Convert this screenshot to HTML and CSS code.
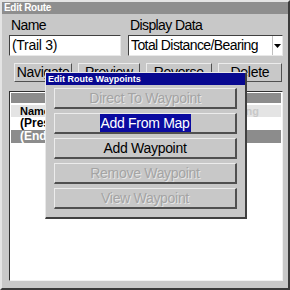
FILE: index.html
```html
<!DOCTYPE html>
<html lang="en">
<head>
    <meta charset="UTF-8">
    <title>Edit Route</title>
    <link rel="stylesheet" href="styles.css">
</head>
<body>
    <div class="window">
        <div class="titlebar">Edit Route</div>

        <div class="fields">
            <div class="field name-field">
                <label>Name</label>
                <div class="input">(Trail 3)</div>
            </div>
            <div class="field data-field">
                <label>Display Data</label>
                <div class="input select">
                    <span class="value">Total Distance/Bearing</span>
                    <span class="arrow">
                        <svg width="7" height="4" viewBox="0 0 7 4"><path d="M0 0h7L3.5 4z" fill="#000"/></svg>
                    </span>
                </div>
            </div>
        </div>

        <div class="actions">
            <button class="btn btn-nav">Navigate</button>
            <button class="btn btn-prev">Preview</button>
            <button class="btn btn-rev">Reverse</button>
            <button class="btn btn-del">Delete</button>
        </div>

        <div class="list">
            <div class="list-bar"></div>
            <div class="list-head">
                <span class="col-name">Name</span>
                <span class="col-dist">Distance</span>
                <span class="col-bear">Bearing</span>
            </div>
            <div class="row">(Press ENT to add waypoint)</div>
            <div class="row selected">(End of route)</div>
        </div>

        <div class="dialog">
            <div class="dialog-title">Edit Route Waypoints</div>
            <div class="dialog-body">
                <button class="btn dbtn disabled">Direct To Waypoint</button>
                <button class="btn dbtn"><span class="focus">Add From Map</span></button>
                <button class="btn dbtn">Add Waypoint</button>
                <button class="btn dbtn disabled">Remove Waypoint</button>
                <button class="btn dbtn disabled">View Waypoint</button>
            </div>
        </div>
    </div>
</body>
</html>
```

FILE: styles.css
```css
body {
    margin: 0;
    padding: 0;
    font-family: "Liberation Sans", Arial, sans-serif;
    background: #c8c8c8;
}
.window {
    position: relative;
    width: 290px;
    height: 290px;
    box-sizing: border-box;
    background: #c8c8c8;
    border-top: 2px solid #e4e4e4;
    border-left: 2px solid #e4e4e4;
    border-right: 2px solid #3a3a3a;
    border-bottom: 2px solid #3a3a3a;
    overflow: hidden;
}
.titlebar {
    height: 12px;
    background: #8e8e8e;
    color: #fff;
    font-size: 10px;
    font-weight: bold;
    line-height: 12px;
    padding-left: 2px;
    letter-spacing: -0.3px;
}
.fields {
    display: flex;
    gap: 7px;
    padding: 3px 5px 0 7px;
}
.field label {
    display: block;
    font-size: 14px;
    line-height: 17px;
    letter-spacing: -0.6px;
    color: #000;
    padding-left: 2px;
    margin-bottom: 1px;
}
.name-field {
    flex: none;
    width: 112px;
}
.data-field {
    flex: 1;
    min-width: 0;
}
.input {
    height: 21px;
    box-sizing: border-box;
    background: #fff;
    border-top: 1px solid #404040;
    border-left: 1px solid #404040;
    border-right: 1px solid #e8e8e8;
    border-bottom: 1px solid #e8e8e8;
    font-size: 14px;
    line-height: 19px;
    letter-spacing: -0.3px;
    padding-left: 2px;
    white-space: nowrap;
    overflow: hidden;
}
.select {
    display: flex;
    justify-content: space-between;
}
.value {
    letter-spacing: -0.6px;
    overflow: hidden;
}
.arrow {
    flex: none;
    width: 9px;
    display: flex;
    align-items: center;
    justify-content: center;
    background: #fff;
    border-left: 1px solid #c0c0c0;
}
.actions {
    display: flex;
    gap: 6px;
    padding: 7px 6px 0 12px;
}
.btn {
    font-family: "Liberation Sans", Arial, sans-serif;
    background: #c8c8c8;
    color: #000;
    font-size: 14px;
    letter-spacing: -0.3px;
    height: 19px;
    line-height: 17px;
    padding: 0;
    border-top: 1px solid #ececec;
    border-left: 1px solid #ececec;
    border-right: 1px solid #505050;
    border-bottom: 1px solid #505050;
    box-sizing: border-box;
    white-space: nowrap;
}
.btn-nav { width: 59px; }
.btn-prev { width: 62px; }
.btn-rev { width: 67px; }
.btn-del { width: 65px; }
.list {
    margin: 9px 5px 0 7px;
    height: 186px;
    background: #fff;
    border-top: 1px solid #303030;
    border-left: 1px solid #303030;
    border-right: 1px solid #f0f0f0;
    border-bottom: 1px solid #f0f0f0;
    padding: 1px 1px;
}
.list-bar {
    height: 10px;
    background: #8c8c8c;
    margin-bottom: 2px;
}
.list-head {
    display: flex;
    height: 12px;
    background: #e4e4e4;
    font-size: 11px;
    font-weight: bold;
    line-height: 12px;
    color: #000;
}
.col-name { width: 146px; padding-left: 9px; }
.col-dist { width: 52px; color: #c8c8c8; }
.col-bear { color: #c8c8c8; }
.row {
    height: 13px;
    font-size: 12px;
    font-weight: bold;
    line-height: 13px;
    padding-left: 9px;
    white-space: nowrap;
    color: #000;
}
.row.selected {
    background: #8c8c8c;
    color: #fff;
}
.dialog {
    position: absolute;
    left: 43px;
    top: 70px;
    width: 202px;
    box-sizing: border-box;
    background: #c8c8c8;
    border-top: 1px solid #e8e8e8;
    border-left: 1px solid #e8e8e8;
    border-right: 2px solid #404040;
    border-bottom: 2px solid #404040;
}
.dialog-title {
    height: 12px;
    background: #080890;
    color: #fff;
    font-size: 9px;
    font-weight: bold;
    line-height: 12px;
    padding-left: 2px;
}
.dialog-body {
    display: flex;
    flex-direction: column;
    gap: 4px;
    padding: 3px 8px 8px 8px;
}
.dbtn {
    width: 100%;
    height: 21px;
    line-height: 19px;
    border-right-width: 2px;
    border-bottom-width: 2px;
}
.dbtn.disabled {
    color: #a4a4a4;
    text-shadow: 1px 1px 0 #e6e6e6;
}
.focus {
    background: #0a0aa0;
    color: #fff;
    padding: 1px 1px;
}
```
